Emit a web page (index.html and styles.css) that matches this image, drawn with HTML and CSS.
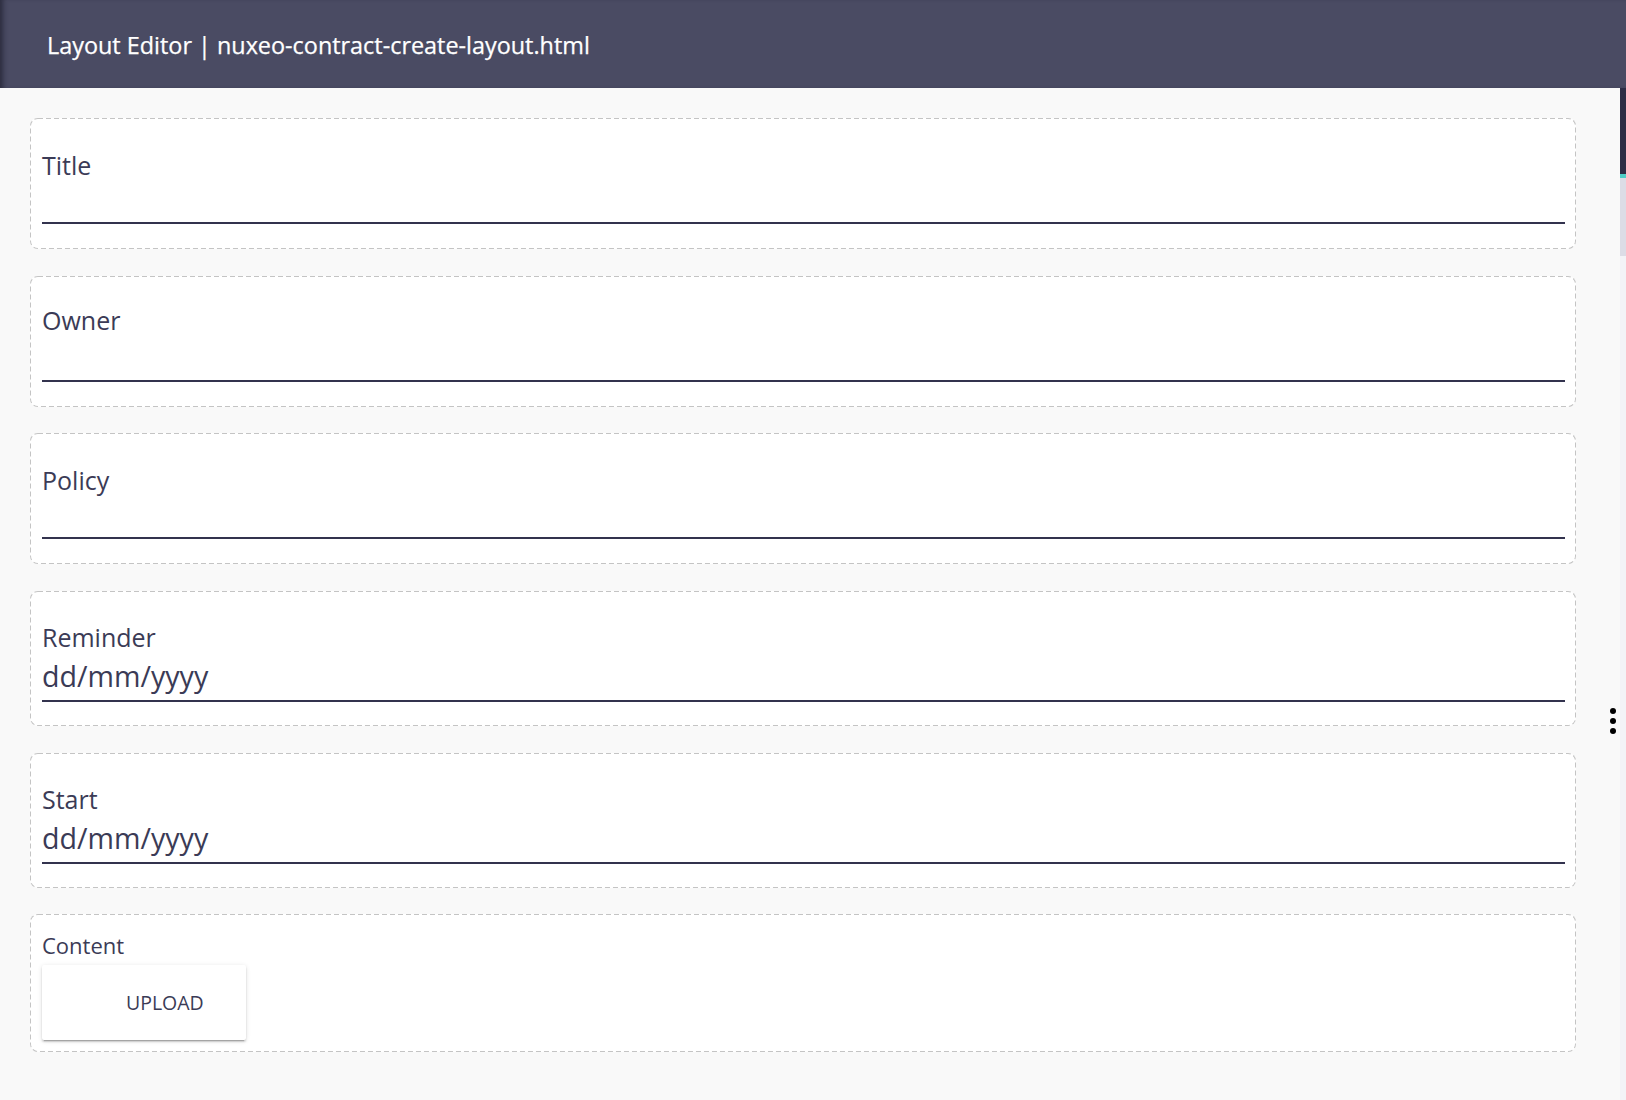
FILE: index.html
```html
<!DOCTYPE html>
<html lang="en">
<head>
<meta charset="utf-8">
<title>Layout Editor</title>
<link rel="stylesheet" href="styles.css">
</head>
<body>
<header class="topbar">
  <h1 class="topbar-title">Layout Editor | nuxeo-contract-create-layout.html</h1>
</header>
<div class="workspace">
  <main class="canvas">
    <section class="field-card">
      <label class="field-label">Title</label>
      <div class="text-input"></div>
    </section>
    <section class="field-card">
      <label class="field-label field-label-raised">Owner</label>
      <div class="text-input"></div>
    </section>
    <section class="field-card">
      <label class="field-label">Policy</label>
      <div class="text-input"></div>
    </section>
    <section class="field-card date-card">
      <label class="field-label">Reminder</label>
      <div class="date-input">dd/mm/yyyy</div>
    </section>
    <section class="field-card date-card">
      <label class="field-label">Start</label>
      <div class="date-input">dd/mm/yyyy</div>
    </section>
    <section class="field-card blob-card">
      <label class="blob-label">Content</label>
      <button class="upload-btn" type="button">UPLOAD</button>
    </section>
  </main>
  <aside class="scroll-rail">
    <div class="rail-thumb"></div>
    <div class="rail-accent"></div>
    <div class="rail-track"></div>
  </aside>
  <div class="more-menu" aria-label="more">
    <span class="dot"></span><span class="dot"></span><span class="dot"></span>
  </div>
</div>
</body>
</html>
```

FILE: styles.css
```css
* { box-sizing: border-box; }

html, body {
  margin: 0;
  padding: 0;
  height: 100%;
}

body {
  font-family: "Open Sans", "Noto Sans", "Liberation Sans", sans-serif;
  background: #f9f9f9;
  color: #3b3b56;
  overflow: hidden;
}

.topbar {
  height: 88px;
  background: #4a4b63;
  box-shadow: inset 6px 0 5px -3px rgba(20, 20, 35, 0.55);
  display: flex;
  align-items: center;
  padding-left: 47px;
}

.topbar-title {
  margin: 0;
  padding-top: 2px;
  font-size: 23.4px;
  font-weight: 400;
  color: #ffffff;
  -webkit-text-stroke: 0.25px #ffffff;
  white-space: nowrap;
}

.workspace {
  position: relative;
  display: flex;
  height: calc(100% - 88px);
}

.canvas {
  flex: 1;
  padding: 30px 44px 0 30px;
  display: flex;
  flex-direction: column;
  gap: 26.7px;
}

.field-card {
  background-color: #ffffff;
  background-image: url("data:image/svg+xml,%3Csvg xmlns='http://www.w3.org/2000/svg' width='100%25' height='100%25'%3E%3Crect x='0' y='0' width='100%25' height='100%25' rx='8' ry='8' fill='none' stroke='%23c4c4c4' stroke-width='2' stroke-dasharray='5 3'/%3E%3C/svg%3E");
  border: 1px solid transparent;
  border-radius: 8px;
  background-origin: border-box;
  background-clip: border-box;
  padding: 29px 10px 24px 11px;
}

.field-label {
  display: block;
  font-size: 25px;
  line-height: 34px;
  color: #3b3b56;
}

.field-label-raised {
  margin-top: -3px;
  margin-bottom: 3px;
}

.text-input {
  height: 42px;
  border-bottom: 2px solid #33334e;
}

.date-card {
  padding-top: 28px;
  padding-bottom: 23px;
}

.date-input {
  height: 48px;
  font-size: 28.6px;
  line-height: 44px;
  color: #3b3b56;
  border-bottom: 2px solid #33334e;
}

.blob-card {
  padding: 15px 10px 11px 11px;
}

.blob-label {
  display: block;
  font-size: 22px;
  line-height: 30px;
  color: #3b3b56;
  margin-bottom: 5px;
}

.upload-btn {
  display: block;
  width: 204px;
  height: 75px;
  border: none;
  border-radius: 2px;
  background: #ffffff;
  font-family: inherit;
  font-size: 19.5px;
  color: #3b3b56;
  text-align: left;
  padding: 0 0 0 84px;
  box-shadow: 0 2px 2px rgba(0,0,0,0.14), 0 1px 5px rgba(0,0,0,0.12), 0 3px 1px -2px rgba(0,0,0,0.2);
}

.scroll-rail {
  width: 6px;
  background: #f3f3f7;
  display: flex;
  flex-direction: column;
}

.rail-thumb {
  height: 86px;
  background: #2d2d45;
}

.rail-accent {
  height: 4px;
  background: #4fcdc6;
}

.rail-track {
  height: 78px;
  background: #dcdce6;
}

.more-menu {
  position: absolute;
  left: 1610px;
  top: 620px;
  display: flex;
  flex-direction: column;
  gap: 4px;
}

.dot {
  display: block;
  width: 6px;
  height: 6px;
  border-radius: 50%;
  background: #000000;
}
```
